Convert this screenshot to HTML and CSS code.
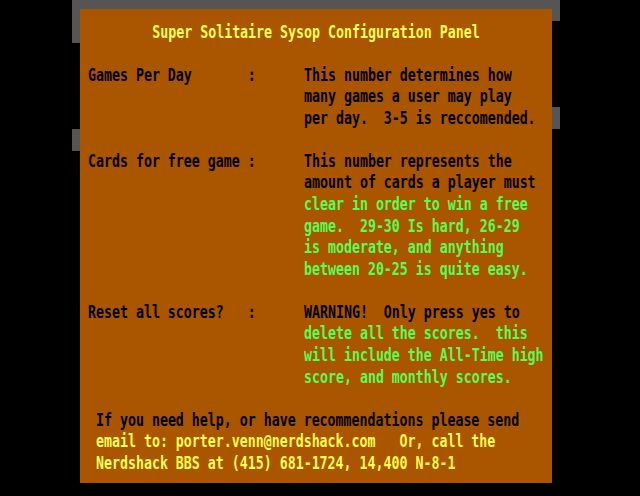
FILE: index.html
```html
<!DOCTYPE html>
<html>
<head>
<meta charset="utf-8">
<link rel="stylesheet" href="styles.css">
</head>
<body>
<div class="screen">
  <div class="backdrop">
    <div class="bk bk-top"></div>
    <div class="bk bk-left1"></div>
    <div class="bk bk-right1"></div>
    <div class="bk bk-left2"></div>
    <div class="bk bk-right2"></div>
  </div>
  <div class="panel">
    <div class="ln title">Super Solitaire Sysop Configuration Panel</div>
    <div class="gap"></div>
    <div class="field">
      <div class="ln label">Games Per Day       :</div>
      <div class="desc">
        <div class="ln">This number determines how</div>
        <div class="ln">many games a user may play</div>
        <div class="ln">per day.  3-5 is reccomended.</div>
      </div>
    </div>
    <div class="gap"></div>
    <div class="field">
      <div class="ln label">Cards for free game :</div>
      <div class="desc">
        <div class="ln">This number represents the</div>
        <div class="ln">amount of cards a player must</div>
        <div class="ln green">clear in order to win a free</div>
        <div class="ln green">game.  29-30 Is hard, 26-29</div>
        <div class="ln green">is moderate, and anything</div>
        <div class="ln green">between 20-25 is quite easy.</div>
      </div>
    </div>
    <div class="gap"></div>
    <div class="field">
      <div class="ln label">Reset all scores?   :</div>
      <div class="desc">
        <div class="ln">WARNING!  Only press yes to</div>
        <div class="ln green">delete all the scores.  this</div>
        <div class="ln green">will include the All-Time high</div>
        <div class="ln green">score, and monthly scores.</div>
      </div>
    </div>
    <div class="gap"></div>
    <div class="footer">
      <div class="ln">If you need help, or have recommendations please send</div>
      <div class="ln yellow">email to: porter.venn@nerdshack.com   Or, call the</div>
      <div class="ln yellow">Nerdshack BBS at (415) 681-1724, 14,400 N-8-1</div>
    </div>
  </div>
</div>
</body>
</html>
```
FILE: styles.css
```css
html, body {
  margin: 0;
  padding: 0;
  background: #000;
}
.screen {
  position: relative;
  width: 640px;
  height: 496px;
  background: #000;
  overflow: hidden;
  font-family: "DejaVu Sans Mono", "Liberation Mono", monospace;
  font-weight: bold;
  font-size: 13.288px;
  color: #000;
}
.backdrop {
  position: absolute;
  inset: 0;
}
.bk {
  position: absolute;
  background: #555555;
}
.bk-top { left: 72px; top: 0; width: 488px; height: 9px; }
.bk-left1 { left: 72px; top: 0; width: 8px; height: 43px; }
.bk-right1 { left: 552px; top: 0; width: 8px; height: 21px; }
.bk-left2 { left: 72px; top: 129px; width: 8px; height: 22px; }
.bk-right2 { left: 552px; top: 107px; width: 8px; height: 22px; }

.panel {
  position: relative;
  margin: 9px 0 0 80px;
  width: 472px;
  height: 474px;
  box-sizing: border-box;
  padding-top: 13.5px;
  background: #AA5500;
}
.ln {
  height: 21.565px;
  line-height: 21.565px;
  white-space: pre;
  transform: scaleY(1.35);
  transform-origin: 50% 70%;
}
.gap {
  height: 21.565px;
}
.title {
  text-align: center;
  color: #FFFF55;
}
.field {
  display: grid;
  grid-template-columns: 216px 1fr;
  padding-left: 8px;
}
.footer {
  padding-left: 16px;
}
.green { color: #55FF55; }
.yellow { color: #FFFF55; }
```
